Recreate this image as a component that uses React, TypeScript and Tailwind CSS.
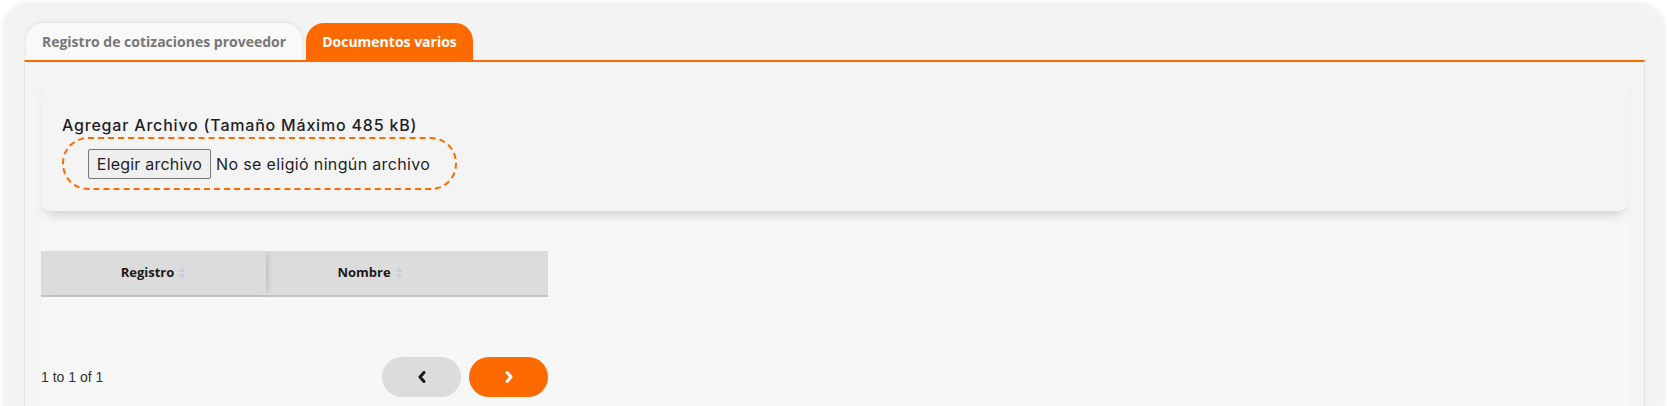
// Proveedor documents tab: upload card + empty documents table with pager.

const orange = "bg-[#ff6a00]";

function SortIcon() {
  return (
    <svg width="8" height="12" viewBox="0 0 8 12" className="ml-[4px] shrink-0">
      <path d="M4 0.5 L7.5 5 H0.5 Z" fill="#c6cedb" />
      <path d="M4 11.5 L7.5 7 H0.5 Z" fill="#c6cedb" />
    </svg>
  );
}

function Chevron({ dir, color }: { dir: "left" | "right"; color: string }) {
  const d = dir === "left" ? "M7 1.5 L3 6 L7 10.5" : "M3 1.5 L7 6 L3 10.5";
  return (
    <svg width="10" height="12" viewBox="0 0 10 12">
      <path d={d} fill="none" stroke={color} strokeWidth="3" strokeLinecap="round" strokeLinejoin="round" />
    </svg>
  );
}

function UploadCard() {
  return (
    <div className="rounded-[10px] bg-[#f4f4f4] pl-[21px] pt-[36px] pb-[21px] shadow-[0_10px_12px_-6px_rgba(0,0,0,0.16)] relative z-10">
      <div className="text-[16px] leading-[24px] text-[#1e1e2a] font-medium tracking-[0.8px] font-['Inter',sans-serif]">
        Agregar Archivo (Tamaño Máximo 485 kB)
      </div>
      <div className="flex items-center w-[395px] h-[53px] rounded-[26px] border-2 border-dashed border-[#ff6a00] pl-[24px]">
        <button className="h-[30px] w-[123px] rounded-[2px] border border-[#767676] bg-[#efefef] text-[16px] text-[#1e1e2a] font-['Inter',sans-serif] tracking-[0.2px]">
          Elegir archivo
        </button>
        <span className="ml-[5px] text-[16px] text-[#1e1e2a] font-['Inter',sans-serif] tracking-[0.35px]">
          No se eligió ningún archivo
        </span>
      </div>
    </div>
  );
}

function DocsTable() {
  return (
    <div className="bg-[#f7f7f7] pt-[40px] h-[200px]">
      <div className="w-[507px]">
        <div className="flex h-[46px] bg-[#dcdcdc] border-b-2 border-[#c4c4c4] font-['Open_Sans',sans-serif] text-[13px] font-bold text-[#1a1a1a]">
          <div className="relative z-10 flex w-[225px] items-center justify-center shadow-[4px_0_6px_-3px_rgba(0,0,0,0.18)] bg-[#dcdcdc]">
            Registro
            <SortIcon />
          </div>
          <div className="flex w-[208px] items-center justify-center">
            Nombre
            <SortIcon />
          </div>
        </div>
        <div className="h-[6px] w-[420px] shadow-[0_6px_8px_-6px_rgba(0,0,0,0.1)]" />
        <div className="mt-[54px] flex items-center justify-between">
          <span className="font-['Liberation_Sans',sans-serif] text-[14px] text-[#333]">1 to 1 of 1</span>
          <div className="flex gap-[8px]">
            <button className="flex h-[40px] w-[79px] items-center justify-center rounded-full bg-[#dcdcdc]">
              <Chevron dir="left" color="#1a1a1a" />
            </button>
            <button className={`flex h-[40px] w-[79px] items-center justify-center rounded-full ${orange}`}>
              <Chevron dir="right" color="#ffffff" />
            </button>
          </div>
        </div>
      </div>
    </div>
  );
}

export default function App() {
  return (
    <div className="h-[406px] overflow-hidden bg-white pt-[3px] pl-[3px] pr-[5px]">
      <div className="rounded-[26px] bg-[#f3f3f3] pl-[21px] pr-[20px] pt-[20px] h-[420px] shadow-[0_0_5px_rgba(0,0,0,0.07)]">
        <div className="flex gap-[4px] pl-[2px] font-['Open_Sans',sans-serif] text-[14px] font-bold">
          <div className="flex h-[37px] w-[276px] items-center justify-center rounded-t-[18px] bg-[#f9f9f9] text-[#777] shadow-[0_-1px_4px_rgba(0,0,0,0.08)]">
            Registro de cotizaciones proveedor
          </div>
          <div className={`flex h-[37px] w-[167px] items-center justify-center rounded-t-[18px] ${orange} text-white`}>
            Documentos varios
          </div>
        </div>
        <div className="border-t-2 border-[#ff6a00] border-x border-x-[#dce4ee] bg-[#f4f4f4] px-[16px] pt-[15px] h-[400px]">
          <UploadCard />
          <DocsTable />
        </div>
      </div>
    </div>
  );
}
